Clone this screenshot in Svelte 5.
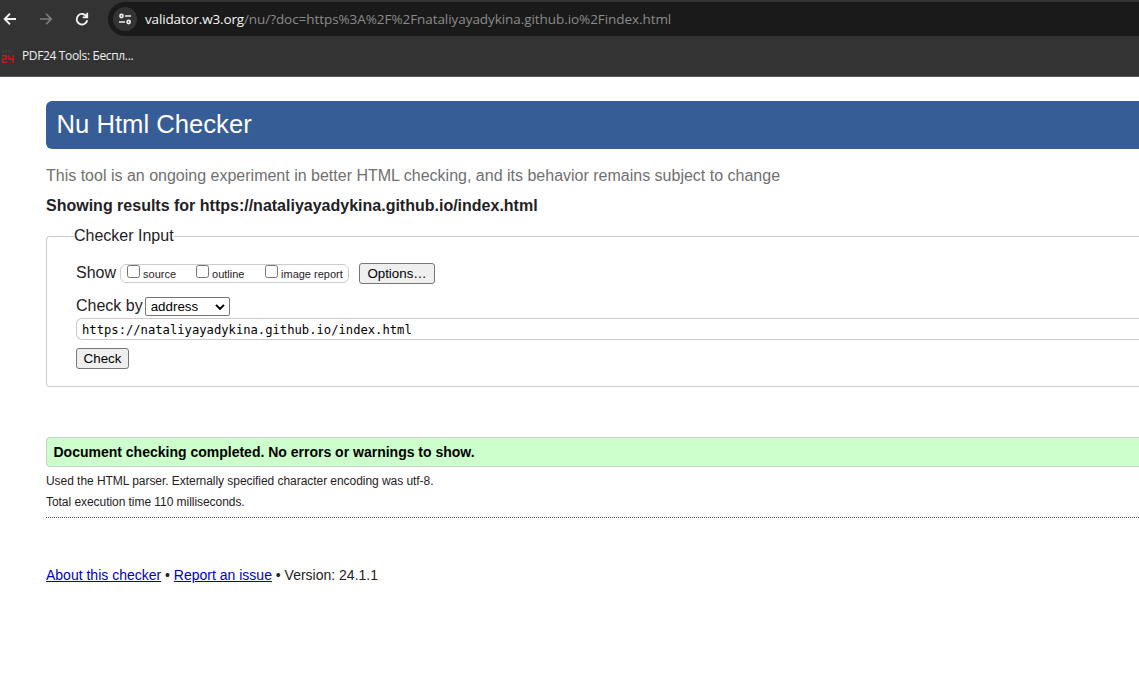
<script lang="ts">
  const shows = ['source', 'outline', 'image report'];
  let address = $state('https://nataliyayadykina.github.io/index.html');
</script>

<div class="window">
  <header class="chrome">
    <div class="toolbar">
      <svg class="nav back" viewBox="0 0 16 16"><path d="M14 8H3M8 2.7 2.7 8 8 13.3" /></svg>
      <svg class="nav forward" viewBox="0 0 16 16"><path d="M2 8h11M8 2.7 13.3 8 8 13.3" /></svg>
      <svg class="nav reload" viewBox="0 0 16 16"><path d="M12.6 5.6A5.3 5.3 0 1 0 13.2 9.2M13.2 1.8v4.6H8.8" /></svg>
      <div class="omnibox">
        <span class="site">
          <svg viewBox="0 0 14 14"><circle cx="3.5" cy="4" r="1.6" /><path d="M7 4h6M1 10h6" /><circle cx="10.6" cy="10" r="1.6" /></svg>
        </span>
        <span class="url"><b>validator.w3.org</b>/nu/?doc=https%3A%2F%2Fnataliyayadykina.github.io%2Findex.html</span>
      </div>
    </div>
    <div class="bookmarks">
      <svg class="pdf" viewBox="0 0 14 14"><path class="faint" d="M2 0v3M5 0v3M8 0v3M11 0v3" /><path d="M1 5.8h4.4v3.1H1.7v3.4H6.3M8 5v4.3h5M12.2 5v8" /></svg>
      <span>PDF24 Tools: Беспл...</span>
    </div>
  </header>

  <main>
    <h1>Nu Html Checker</h1>
    <p class="note">This tool is an ongoing experiment in better HTML checking, and its behavior remains subject to change</p>
    <h2>Showing results for https://nataliyayadykina.github.io/index.html</h2>

    <fieldset>
      <legend>Checker Input</legend>
      <div class="row show">
        <span class="caption">Show</span>
        <div class="options">
          {#each shows as name}
            <label><input type="checkbox" /><span>{name}</span></label>
          {/each}
        </div>
        <button class="opt">Options…</button>
      </div>
      <div class="row by">
        <span>Check by</span>
        <div class="select">address<svg viewBox="0 0 10 6"><path d="m1 .9 4 4 4-4" /></svg></div>
      </div>
      <input class="address" type="text" bind:value={address} spellcheck="false" />
      <button class="check">Check</button>
    </fieldset>

    <p class="success">Document checking completed. No errors or warnings to show.</p>
    <p class="detail">Used the HTML parser. Externally specified character encoding was utf-8.</p>
    <p class="detail">Total execution time 110 milliseconds.</p>
    <footer><a href="#about">About this checker</a> • <a href="#issue">Report an issue</a> • Version: 24.1.1</footer>
  </main>
</div>

<style>
  :global(body) { margin: 0; background: #fff; }
  .window {
    height: 673px;
    overflow: hidden;
    font-family: "Liberation Sans", Arial, sans-serif;
    font-size: 16px;
    color: #1f2126;
  }
  .window * { box-sizing: border-box; }
  p, h1, h2 { margin: 0; white-space: nowrap; }

  .chrome {
    height: 77px;
    padding-top: 2px;
    background: #333;
    border-bottom: 1px solid #5a5a5a;
    font-family: "Open Sans", "Noto Sans", sans-serif;
  }
  .toolbar { display: flex; align-items: center; height: 34px; }
  .nav { width: 16px; height: 16px; fill: none; stroke: #f2f2f2; stroke-width: 1.9; flex: none; }
  .back { margin-left: 2px; }
  .forward { margin-left: 20px; stroke: #808080; stroke-width: 1.6; }
  .reload { margin-left: 20px; }
  .omnibox {
    display: flex;
    align-items: center;
    flex: 1;
    height: 34px;
    margin-left: 18px;
    padding-left: 5px;
    background: #1a1a1a;
    border-radius: 17px 0 0 17px;
  }
  .site { display: grid; place-items: center; width: 24px; height: 24px; border-radius: 50%; background: #333; }
  .site svg { width: 14px; height: 14px; fill: none; stroke: #eee; stroke-width: 1.6; }
  .url { margin-left: 8px; font-size: 13.5px; letter-spacing: -0.065px; color: #8b8b8b; white-space: nowrap; }
  .url b { font-weight: 400; letter-spacing: -0.16px; color: #f5f5f5; }
  .bookmarks { display: flex; align-items: center; height: 38px; font-size: 12px; letter-spacing: -0.35px; color: #f0f0f0; }
  .pdf { width: 14px; height: 14px; margin: 4px 7px 0 1px; fill: none; stroke: #c91820; stroke-width: 1.5; }
  .pdf .faint { stroke: #454545; stroke-width: 1; }

  main { padding: 24px 0 0 46px; }
  h1 {
    height: 48px;
    padding-left: 10.5px;
    line-height: 46px;
    font-size: 25.65px;
    font-weight: 400;
    color: #fff;
    background: #365d95;
    border-radius: 6px 0 0 6px;
  }
  .note { margin-top: 17px; line-height: 20px; color: #707070; }
  h2 { margin-top: 10px; line-height: 20px; font-size: 16px; }
  fieldset {
    height: 161px;
    margin: 10px 0 0;
    padding: 0 0 0 29px;
    border: 1px solid #ccc;
    border-right: 0;
    border-radius: 4px 0 0 4px;
    min-width: 0;
  }
  legend { margin-left: -2px; padding: 0; height: 20px; line-height: 20px; }
  .row { display: flex; align-items: center; white-space: nowrap; }
  .show { height: 21px; margin-top: 17px; }
  .caption { padding-bottom: 2px; }
  .options {
    display: flex;
    align-items: center;
    width: 229px;
    height: 19px;
    margin-left: 4px;
    padding-left: 6px;
    border: 1px solid #ccc;
    border-radius: 6px;
    font-size: 11px;
  }
  label { display: flex; width: 69px; flex: none; }
  label input { width: 13px; height: 13px; margin: -1px 3px 0 0; flex: none; }
  label span { height: 15px; line-height: 17px; }
  button {
    display: block;
    height: 21px;
    padding: 0;
    border: 1px solid #767676;
    border-radius: 3px;
    background: #efefef;
    color: #000;
    font: 13.33px/19px "Liberation Sans", Arial, sans-serif;
  }
  .opt { width: 76px; margin-left: 10px; }
  .by { height: 20px; margin-top: 12px; }
  .select {
    display: flex;
    align-items: center;
    justify-content: space-between;
    width: 85px;
    height: 19px;
    margin: 1px 0 0 2px;
    padding: 0 4px 0 5px;
    border: 1px solid #767676;
    border-radius: 2px;
    color: #000;
    font-size: 13.33px;
  }
  .select svg { width: 10px; height: 6px; fill: none; stroke: #000; stroke-width: 2; }
  .address {
    display: block;
    width: 100%;
    height: 22px;
    margin: 2px 0 0;
    padding: 1px 5px 0;
    border: 1px solid #ccc;
    border-right: 0;
    border-radius: 6px 0 0 6px;
    outline: 0;
    color: #000;
    font: 12.18px "DejaVu Sans Mono", monospace;
  }
  .check { width: 53px; margin-top: 8px; }
  .success {
    height: 30px;
    margin-top: 50px;
    padding-left: 6.5px;
    border: 1px solid #ccc;
    border-right: 0;
    border-radius: 4px 0 0 4px;
    background: #cfc;
    color: #000;
    font-size: 14px;
    font-weight: 700;
    line-height: 28px;
  }
  .detail { height: 21px; font-size: 12px; letter-spacing: -0.05px; line-height: 21px; }
  .success + .detail { margin-top: 4px; }
  footer {
    margin-top: 4px;
    padding-top: 47px;
    border-top: 1px dotted #555;
    font-size: 14px;
    line-height: 20px;
  }
  a { color: #00b; }
</style>
